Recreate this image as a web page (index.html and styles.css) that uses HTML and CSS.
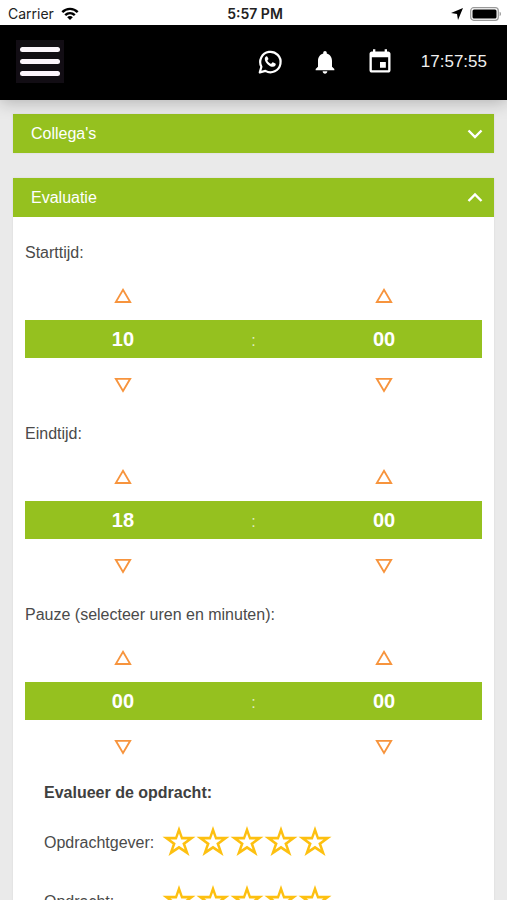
FILE: index.html
```html
<!DOCTYPE html>
<html lang="nl">

<head>
    <meta charset="UTF-8">
    <meta name="viewport" content="width=device-width">
    <title>Evaluatie</title>
    <link rel="stylesheet" href="styles.css">
</head>

<body>
    <!-- Iconen die vaker voorkomen -->
    <svg class="sprite" aria-hidden="true">
        <symbol id="up" viewBox="0 0 20 20">
            <path d="M10 5.8L17.2 18H2.8z" fill="none" stroke="currentColor" stroke-width="1.8" />
        </symbol>
        <symbol id="down" viewBox="0 0 20 20">
            <path d="M10 17L17.2 4.8H2.8z" fill="none" stroke="currentColor" stroke-width="1.8" />
        </symbol>
        <symbol id="star" viewBox="0 0 34 34">
            <path d="M17 0L20.7 10.8H33.5L23.4 18.3L27.5 30L17 23L6.5 30L10.6 18.3L.5 10.8H13.3z M17 7.5L14.8 13.6H8.5L13.7 17.3L11.4 23.5L17 19.8L22.6 23.5L20.3 17.3L25.5 13.6H19.2z" fill="currentColor" fill-rule="evenodd" />
        </symbol>
    </svg>

    <div class="statusbar">
        <div class="carrier">
            <span>Carrier</span>
            <svg width="18" height="14" viewBox="0 0 18 14">
                <g fill="none" stroke="#000" stroke-width="2.4">
                    <path d="M1.3 5.2C5.6 .8 12.4 .8 16.7 5.2" />
                    <path d="M4.2 8.2C7 5.5 11 5.5 13.8 8.2" />
                </g>
                <path d="M9 13L6.2 10.2C7.8 8.7 10.2 8.7 11.8 10.2z" />
            </svg>
        </div>
        <div class="hour">5:57 PM</div>
        <div class="power">
            <svg width="12" height="12" viewBox="0 0 12 12">
                <path d="M12 0L7 12L6 6L0 5z" />
            </svg>
            <svg width="32" height="14" viewBox="0 0 32 14">
                <rect x=".7" y=".7" width="27.6" height="12.6" rx="3" fill="#fff" stroke="#999" stroke-width="1.2" />
                <rect x="2.5" y="2.5" width="24" height="9" rx="1.5" />
                <path d="M29.6 4.8c1.8.6 1.8 3.8 0 4.4z" fill="#999" />
            </svg>
        </div>
    </div>

    <header>
        <button class="menu" aria-label="Menu">
            <span></span>
            <span></span>
            <span></span>
        </button>
        <nav>
            <a href="#whatsapp" aria-label="WhatsApp">
                <svg width="28" height="28" viewBox="0 0 28 28">
                    <path d="M3.8 24.4L5.4 18.8A10.2 10.2 0 1 1 9.4 22.9z" fill="none" stroke="#fff" stroke-width="2.2" stroke-linejoin="round" />
                    <path d="M10.6 8.3c-.7 0-1.8.9-1.8 2.6 0 3.3 4.6 7.9 8.2 7.9 1.7 0 2.8-1.2 2.8-2.7 0-.5-2.7-1.8-3.1-1.8-.5 0-1 1.4-1.6 1.4-1 0-3.7-2.4-3.7-3.3 0-.5 1-1 1-1.5 0-.4-1-2.6-1.8-2.6z" fill="#fff" />
                </svg>
            </a>
            <a href="#meldingen" aria-label="Meldingen">
                <svg width="28" height="28" viewBox="0 0 24 24">
                    <path fill="#fff" d="M12 22c1.1 0 2-.9 2-2h-4c0 1.1.89 2 2 2zm6-6v-5c0-3.07-1.64-5.64-4.5-6.32V4c0-.83-.67-1.5-1.5-1.5s-1.5.67-1.5 1.5v.68C7.63 5.36 6 7.92 6 11v5l-2 2v1h16v-1l-2-2z" />
                </svg>
            </a>
            <a href="#agenda" aria-label="Agenda">
                <svg width="28" height="28" viewBox="0 0 24 24">
                    <path fill="#fff" d="M17 12h-5v5h5v-5zM16 1v2H8V1H6v2H5c-1.11 0-1.99.9-1.99 2L3 19c0 1.1.89 2 2 2h14c1.1 0 2-.9 2-2V5c0-1.1-.9-2-2-2h-1V1h-2zm3 18H5V8h14v11z" />
                </svg>
            </a>
            <time>17:57:55</time>
        </nav>
    </header>

    <main>
        <section class="card">
            <button class="card-title" aria-expanded="false">
                Collega's
                <svg width="16" height="16" viewBox="0 0 16 16">
                    <path d="M1.5 4.5L8 11L14.5 4.5" fill="none" stroke="#fff" stroke-width="2.4" />
                </svg>
            </button>
        </section>

        <section class="card">
            <button class="card-title" aria-expanded="true">
                Evaluatie
                <svg width="16" height="16" viewBox="0 0 16 16">
                    <path d="M1.5 11L8 4.5L14.5 11" fill="none" stroke="#fff" stroke-width="2.4" />
                </svg>
            </button>
            <div class="card-body">
                <div class="picker">
                    <p>Starttijd:</p>
                    <div class="arrows">
                        <button aria-label="Uur omhoog"><svg><use href="#up" /></svg></button>
                        <button aria-label="Minuten omhoog"><svg><use href="#up" /></svg></button>
                    </div>
                    <div class="value"><b>10</b><span>:</span><b>00</b></div>
                    <div class="arrows">
                        <button aria-label="Uur omlaag"><svg><use href="#down" /></svg></button>
                        <button aria-label="Minuten omlaag"><svg><use href="#down" /></svg></button>
                    </div>
                </div>

                <div class="picker">
                    <p>Eindtijd:</p>
                    <div class="arrows">
                        <button aria-label="Uur omhoog"><svg><use href="#up" /></svg></button>
                        <button aria-label="Minuten omhoog"><svg><use href="#up" /></svg></button>
                    </div>
                    <div class="value"><b>18</b><span>:</span><b>00</b></div>
                    <div class="arrows">
                        <button aria-label="Uur omlaag"><svg><use href="#down" /></svg></button>
                        <button aria-label="Minuten omlaag"><svg><use href="#down" /></svg></button>
                    </div>
                </div>

                <div class="picker">
                    <p>Pauze (selecteer uren en minuten):</p>
                    <div class="arrows">
                        <button aria-label="Uur omhoog"><svg><use href="#up" /></svg></button>
                        <button aria-label="Minuten omhoog"><svg><use href="#up" /></svg></button>
                    </div>
                    <div class="value"><b>00</b><span>:</span><b>00</b></div>
                    <div class="arrows">
                        <button aria-label="Uur omlaag"><svg><use href="#down" /></svg></button>
                        <button aria-label="Minuten omlaag"><svg><use href="#down" /></svg></button>
                    </div>
                </div>

                <div class="rating">
                    <h2>Evalueer de opdracht:</h2>
                    <div class="row" role="group" aria-labelledby="opdrachtgever">
                        <span id="opdrachtgever">Opdrachtgever:</span>
                        <div class="stars">
                            <button aria-label="1 ster"><svg><use href="#star" /></svg></button>
                            <button aria-label="2 sterren"><svg><use href="#star" /></svg></button>
                            <button aria-label="3 sterren"><svg><use href="#star" /></svg></button>
                            <button aria-label="4 sterren"><svg><use href="#star" /></svg></button>
                            <button aria-label="5 sterren"><svg><use href="#star" /></svg></button>
                        </div>
                    </div>
                    <div class="row" role="group" aria-labelledby="opdracht">
                        <span id="opdracht">Opdracht:</span>
                        <div class="stars">
                            <button aria-label="1 ster"><svg><use href="#star" /></svg></button>
                            <button aria-label="2 sterren"><svg><use href="#star" /></svg></button>
                            <button aria-label="3 sterren"><svg><use href="#star" /></svg></button>
                            <button aria-label="4 sterren"><svg><use href="#star" /></svg></button>
                            <button aria-label="5 sterren"><svg><use href="#star" /></svg></button>
                        </div>
                    </div>
                </div>
            </div>
        </section>
    </main>
</body>

</html>
```
FILE: styles.css
```css
* {
    box-sizing: border-box;
}

body {
    margin: 0;
    height: 100vh;
    display: flex;
    flex-direction: column;
    background: #eaeaea;
    color: #4a4a4a;
    font: 16px/20px "Liberation Sans", Arial, sans-serif;
}

button {
    margin: 0;
    padding: 0;
    border: none;
    background: none;
    font: inherit;
    cursor: pointer;
}

svg {
    display: block;
}

.sprite {
    display: none;
}

/*********************/
/* Statusbalk */
/*********************/
.statusbar {
    display: grid;
    grid-template-columns: 1fr auto 1fr;
    align-items: center;
    flex: none;
    height: 25px;
    padding: 2px 5px 0 8px;
    background: #fff;
    color: #222;
    font: 14px/20px Inter, sans-serif;
    z-index: 2;
}

.carrier,
.power {
    display: flex;
    align-items: center;
    gap: 7px;
}

.hour {
    font-weight: 600;
}

.power {
    justify-content: flex-end;
}

/*********************/
/* Zwarte balk */
/*********************/
header {
    display: flex;
    align-items: center;
    justify-content: space-between;
    flex: none;
    height: 75px;
    padding: 0 20px 2px 16px;
    background: #000;
    box-shadow: 0 2px 16px rgba(0, 0, 0, 0.25);
    z-index: 1;
}

.menu {
    display: flex;
    flex-direction: column;
    justify-content: center;
    gap: 7px;
    width: 48px;
    height: 43px;
    padding: 0 4px;
    background: #120d14;
}

.menu span {
    height: 5px;
    border-radius: 3px;
    background: #fdf5fd;
}

nav {
    display: flex;
    align-items: center;
    gap: 27px;
}

nav time {
    color: #f0f0f0;
    font-size: 17px;
}

/*********************/
/* Panelen */
/*********************/
main {
    flex: 1;
    padding: 14px 13px;
    overflow-y: auto;
    scrollbar-width: none;
}

.card {
    margin-bottom: 25px;
    background: #fff;
    box-shadow: 0 0 2px rgba(0, 0, 0, 0.08);
}

.card-title {
    display: flex;
    align-items: center;
    justify-content: space-between;
    width: 100%;
    height: 39px;
    padding: 0 11px 0 18px;
    background: #95c11f;
    color: #fff;
}

.card-body {
    padding: 26px 12px;
}

/*********************/
/* Tijd kiezen */
/*********************/
.picker {
    margin-bottom: 14px;
}

.picker p {
    margin: 0 0 5px;
}

.arrows,
.value {
    display: grid;
    grid-template-columns: 3fr 1fr 3fr;
    align-items: center;
    justify-items: center;
}

.arrows button {
    padding: 16px;
    color: #f7943d;
}

.arrows button:last-child {
    grid-column: 3;
}

.arrows svg {
    width: 20px;
    height: 20px;
}

.value {
    height: 38px;
    background: #95c11f;
    color: #fff;
}

.value span {
    padding-top: 4px;
    color: #dfecbc;
}

.value b {
    font-size: 20px;
}

/*********************/
/* Sterren */
/*********************/
.rating {
    margin-top: -3px;
    padding: 0 19px;
}

.rating h2 {
    margin: 0 0 10px;
    font-size: 16px;
    line-height: 20px;
    color: #404040;
}

.row {
    display: grid;
    grid-template-columns: 118px 1fr;
    align-items: center;
    height: 59px;
}

.stars {
    display: flex;
}

.stars button {
    color: #fdc010;
}

.stars svg {
    width: 34px;
    height: 34px;
}
```
